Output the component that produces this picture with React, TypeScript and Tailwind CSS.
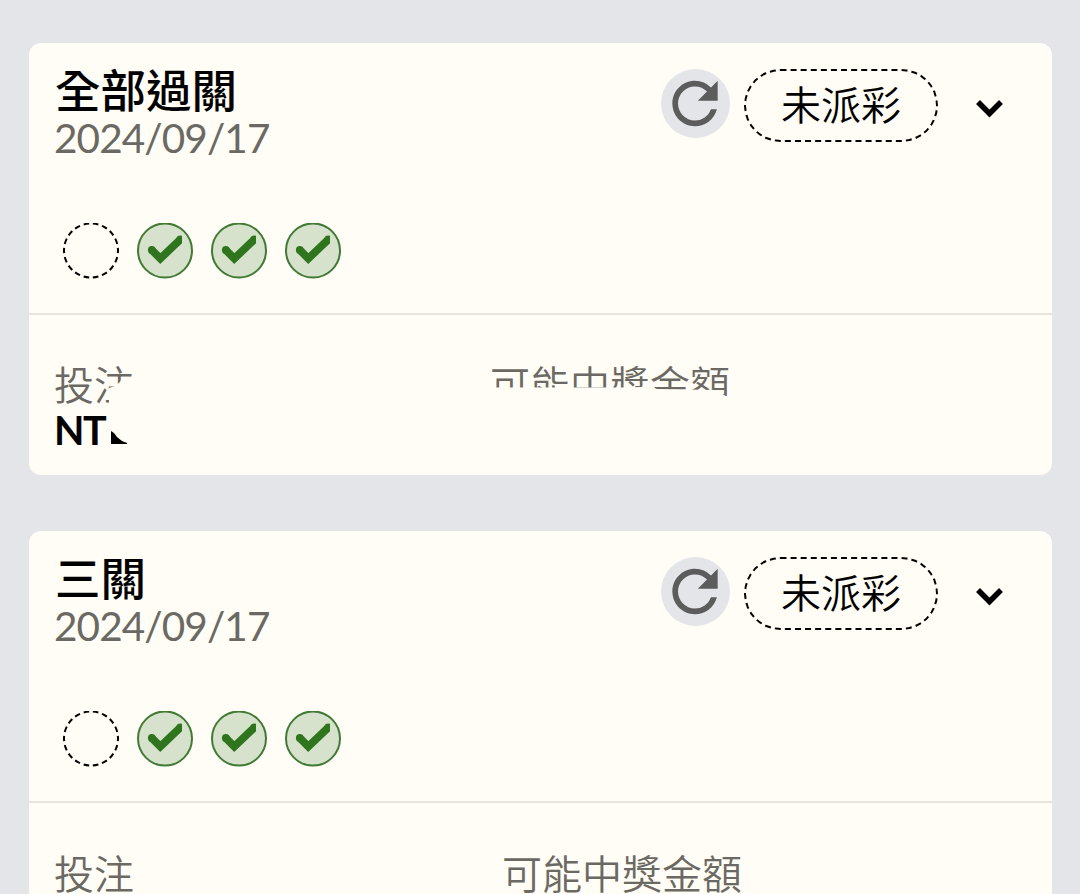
import { MdRefresh } from "react-icons/md";

type Bet = {
  title: string;
  date: string;
  masked: boolean;
};

const bets: Bet[] = [
  { title: "全部過關", date: "2024/09/17", masked: true },
  { title: "三關", date: "2024/09/17", masked: false },
];

function WonLeg() {
  return (
    <svg width="56" height="56" viewBox="0 0 56 56" fill="none">
      <circle cx="28" cy="27.500" r="27" fill="#d6e2cc" stroke="#417a35" strokeWidth="2" />
      <svg width="45" height="56" viewBox="0 0 45 56">
        <path d="M14.8 27l8.5 8.5L43.5 16.300" fill="none" stroke="#2f751d" strokeWidth="7.8" />
        <circle cx="14.8" cy="27" r="3.9" fill="#2f751d" />
        <circle cx="43.3" cy="16.500" r="3.9" fill="#2f751d" />
      </svg>
    </svg>
  );
}

function PendingLeg() {
  return (
    <svg width="56" height="56" viewBox="0 0 56 56" fill="none">
      <circle
        cx="28"
        cy="27.500"
        r="27"
        stroke="#000"
        strokeWidth="2"
        pathLength="180"
        strokeDasharray="6 4"
        strokeDashoffset="3"
      />
    </svg>
  );
}

function BetCard({ title, date, masked }: Bet) {
  return (
    <section className="h-[432px] shrink-0 overflow-hidden rounded-xl bg-[#fffdf5]">
      <div className="h-[272px] border-b-2 border-[#e6e2dc]">
        <div className="flex h-[180px] items-start justify-between pt-[24px] pr-[35px] pl-[25px]">
          <div>
            <h2 className="h-[47px] pl-px text-[45.5px] leading-[48px] font-medium text-black">{title}</h2>
            <p className="text-[40.5px] leading-[47px] tracking-[-0.9px] text-[#6b6963]">{date}</p>
          </div>
          <div className="flex items-center pt-[2px]">
            <button className="mt-[-4px] flex size-[69px] items-center justify-center rounded-full bg-[#e4e5e8]">
              <MdRefresh className="mt-[-1px] mr-px size-[69px] text-[#5c5c5c]" />
            </button>
            <span className="ml-[14px] flex h-[73px] w-[194px] items-center justify-center rounded-full border-2 border-dashed border-black pb-[2px] text-[40px] leading-none [font-weight:350] text-black">
              未派彩
            </span>
            <svg className="mt-[5px] ml-[25px]" width="54" height="40" viewBox="0 0 54 40" fill="none">
              <path d="M15 14L26.5 25.500l11.5-11.5" stroke="#000" strokeWidth="5.5" />
            </svg>
          </div>
        </div>
        <div className="flex gap-[18px] pl-[34px]">
          <PendingLeg />
          <WonLeg />
          <WonLeg />
          <WonLeg />
        </div>
      </div>
      <div className={masked ? "relative flex pt-[47px] pl-[25px]" : "flex pt-[48px] pl-[25px]"}>
        <div className={masked ? "w-[436px]" : "w-[448px]"}>
          <p className="text-[40px] leading-[46px] [font-weight:350] text-[#6b6963]">投注</p>
          <p className="text-[39.5px] leading-[44px] font-bold tracking-[-1.5px] text-black">NT</p>
        </div>
        <p className="text-[40px] leading-[46px] [font-weight:350] text-[#6b6963]">可能中獎金額</p>
        {masked && (
          <svg className="absolute top-0 left-0" width="1023" height="160" viewBox="0 0 1023 160">
            <path
              fill="#fffdf5"
              d="M110 63H93L91 67L86 71L80 73L80 101H110ZM455 72.500L600 72.500L622 71.500L628 74L686 75L692 78L700 83L706 88V110H455Z"
            />
            <path fill="#000" d="M82 116L85 118L88 122L93 126L98 128V129H82Z" />
          </svg>
        )}
      </div>
    </section>
  );
}

export default function App() {
  return (
    <main className="flex h-[894px] w-[1080px] flex-col gap-14 overflow-hidden bg-[#e4e5e8] px-7 pt-[43px] pl-[29px] font-[Lato,'Noto_Sans_CJK_TC',sans-serif]">
      {bets.map((bet) => (
        <BetCard key={bet.title} {...bet} />
      ))}
    </main>
  );
}
